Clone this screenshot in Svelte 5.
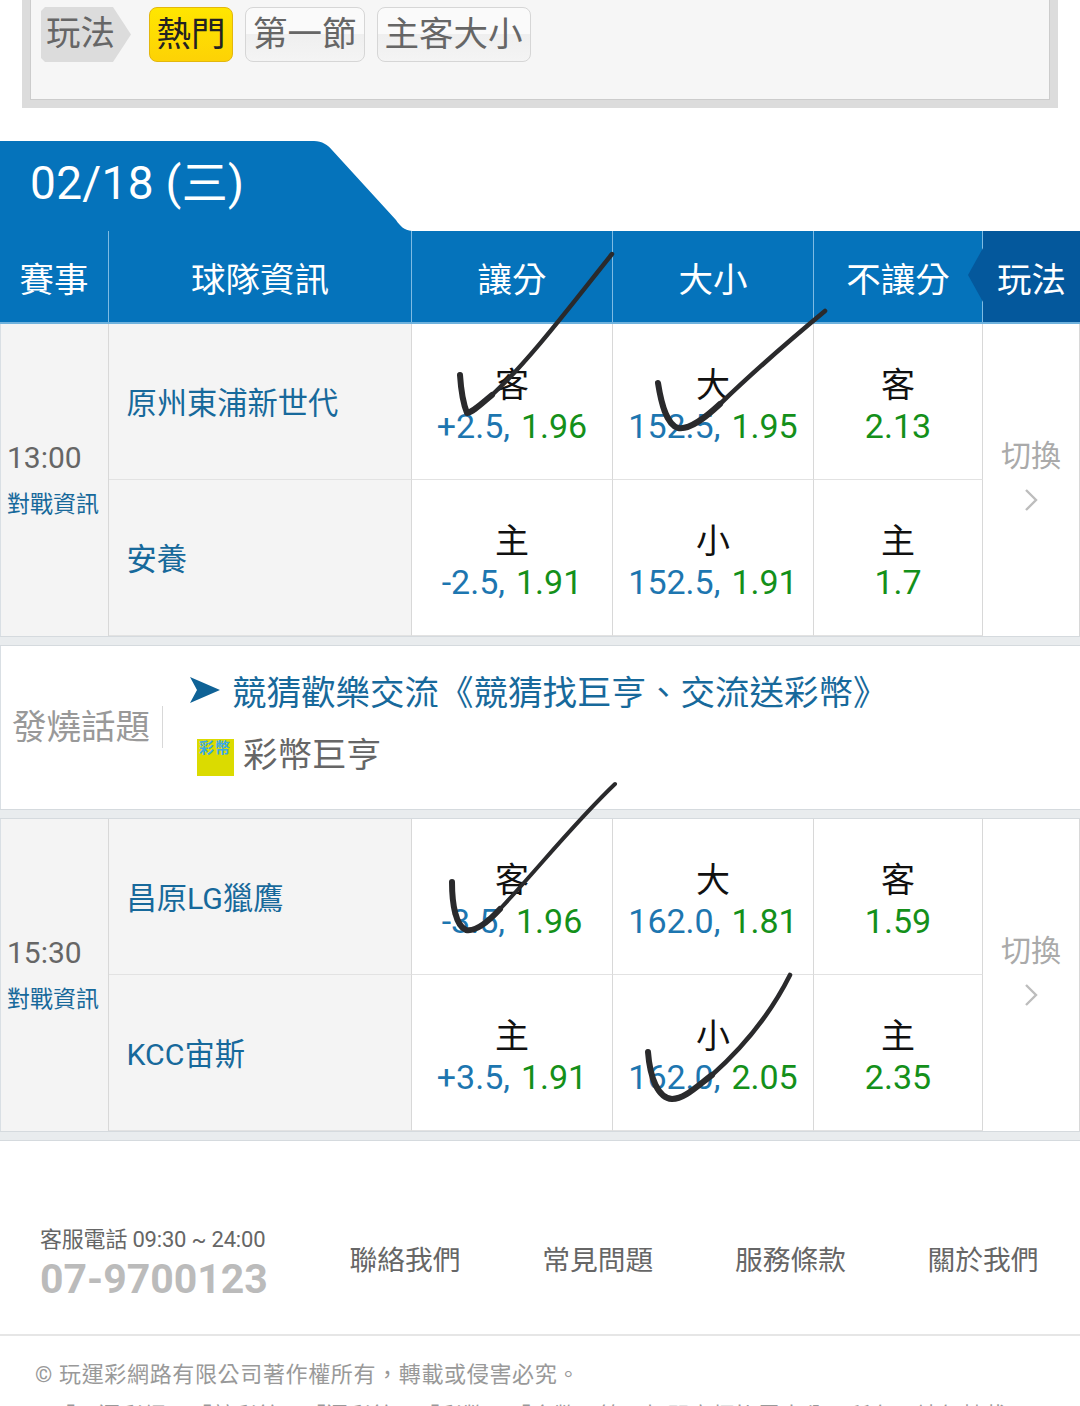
<script>
  const columns = ['賽事', '球隊資訊', '讓分', '大小', '不讓分'];
  const chips = ['第一節', '主客大小'];
  const matches = [
    {
      time: '13:00',
      rows: [
        { team: '原州東浦新世代', odds: [['客', '+2.5,', '1.96'], ['大', '152.5,', '1.95'], ['客', '', '2.13']] },
        { team: '安養', odds: [['主', '-2.5,', '1.91'], ['小', '152.5,', '1.91'], ['主', '', '1.7']] }
      ]
    },
    {
      time: '15:30',
      rows: [
        { team: '昌原LG獵鷹', odds: [['客', '-3.5,', '1.96'], ['大', '162.0,', '1.81'], ['客', '', '1.59']] },
        { team: 'KCC宙斯', odds: [['主', '+3.5,', '1.91'], ['小', '162.0,', '2.05'], ['主', '', '2.35']] }
      ]
    }
  ];
  const links = ['聯絡我們', '常見問題', '服務條款', '關於我們'];
</script>

{#snippet match(m)}
  <div class="match">
    <div class="time"><span class="clock">{m.time}</span><span class="vs">對戰資訊</span></div>
    {#each m.rows as row, i}
      <div class="team" style="grid-row: {i + 1}; grid-column: 2">{row.team}</div>
      {#each row.odds as o, j}
        <div class="odd" style="grid-row: {i + 1}; grid-column: {j + 3}">
          <span class="side">{o[0]}</span>
          <span class="nums">{#if o[1]}<span class="line">{o[1]}</span>{/if}<span class="price">{o[2]}</span></span>
        </div>
      {/each}
    {/each}
    <div class="switch">
      <span>切換</span>
      <svg width="14" height="24" viewBox="0 0 14 24"><path d="M2 2 L12 12 L2 22" fill="none" stroke="#bdbdbd" stroke-width="2.4" /></svg>
    </div>
  </div>
{/snippet}

<div class="page">
  <section class="filter">
    <div class="filter-inner">
      <span class="tag">玩法</span>
      <span class="chip hot">熱門</span>
      {#each chips as c}<span class="chip">{c}</span>{/each}
    </div>
  </section>

  <section class="board">
    <div class="date"><span>02/18 (三)</span></div>
    <div class="head">
      {#each columns as c}<div class="hcell">{c}</div>{/each}
      <div class="hcell play">玩法</div>
    </div>
    {@render match(matches[0])}
    <div class="strip"></div>
    <div class="topics">
      <div class="topics-title"><span>發燒話題</span></div>
      <div class="topics-list">
        <div class="topic one">
          <svg width="30" height="26" viewBox="0 0 30 26"><path d="M0 0 L30 13 L0 26 L7 13 Z" fill="#0f6296" /></svg>
          <span>競猜歡樂交流《競猜找巨亨、交流送彩幣》</span>
        </div>
        <div class="topic two">
          <span class="logo"><span>彩幣</span></span>
          <span>彩幣巨亨</span>
        </div>
      </div>
    </div>
    <div class="strip"></div>
    {@render match(matches[1])}
    <div class="strip last"></div>
  </section>

  <footer>
    <div class="contact">
      <div class="service">
        <span class="hours">客服電話 09:30 ~ 24:00</span>
        <span class="phone">07-9700123</span>
      </div>
      <nav>{#each links as l}<span>{l}</span>{/each}</nav>
    </div>
    <div class="legal">
      <p>© 玩運彩網路有限公司著作權所有，轉載或侵害必究。</p>
      <p class="marks">「玩運彩網」、「競彩館」、「運彩館」、「彩幣」、「金幣」等，相關商標皆屬本公司所有，請勿轉載。</p>
    </div>
  </footer>

  <svg class="ink" width="1080" height="1406" viewBox="0 0 1080 1406">
    <g fill="none" stroke="#2a2a2c" stroke-linecap="round" stroke-linejoin="round">
      <path stroke-width="6" d="M460 375 C461 390 463 403 467 413 C473 412 480 405 492 395" />
      <path stroke-width="4.4" d="M492 395 C530 360 575 300 612 254" />
      <path stroke-width="6" d="M658 383 C661 402 666 424 678 428 C690 430 705 418 720 404" />
      <path stroke-width="4.6" d="M720 404 C750 375 790 340 825 311" />
      <path stroke-width="6" d="M452 882 C452 905 456 926 466 930 C476 932 488 922 500 909" />
      <path stroke-width="4" d="M500 909 C535 872 575 822 615 784" />
      <path stroke-width="6" d="M648 1052 C650 1078 658 1098 672 1099 C684 1099 695 1088 712 1075" />
      <path stroke-width="4.6" d="M712 1075 C740 1050 770 1015 790 975" />
    </g>
  </svg>
</div>

<style>
  :global(body) {
    margin: 0;
    background: #fff;
  }
  .page {
    position: relative;
    width: 1080px;
    height: 1406px;
    overflow: hidden;
    font-family: Roboto, "Noto Sans CJK TC", sans-serif;
    background: #fff;
  }
  .filter {
    margin: 0 22px;
    height: 108px;
    box-sizing: border-box;
    background: #dcdcdc;
    padding: 0 8px 8px;
  }
  .filter-inner {
    height: 100px;
    box-sizing: border-box;
    background: #f6f6f6;
    border-bottom: 1px solid #ccc;
    border-left: 1px solid #ccc;
    border-right: 1px solid #ccc;
    padding: 7px 0 0 10px;
    display: flex;
    align-items: flex-start;
    gap: 12px;
  }
  .tag {
    width: 90px;
    height: 55px;
    box-sizing: border-box;
    padding-left: 5px;
    margin-right: 6px;
    font-size: 34.5px;
    line-height: 53px;
    color: #666;
    background: #dcdcdc;
    clip-path: polygon(0 4px, 4px 0, 72px 0, 90px 50%, 72px 100%, 4px 100%, 0 51px);
  }
  .chip {
    height: 55px;
    box-sizing: border-box;
    padding: 0 7px;
    font-size: 34.5px;
    line-height: 53px;
    color: #666;
    background: linear-gradient(#fafafa 50%, #efefef 50%, #f4f4f4);
    border: 1px solid #d6d6d6;
    border-radius: 8px;
  }
  .chip.hot {
    color: #222;
    padding: 0 6.5px;
    background: linear-gradient(#ffe600, #fdd205);
    border-color: #e3b70d;
  }
  .board {
    margin-top: 33px;
  }
  .date {
    width: 412px;
    height: 90px;
    background: #0573bb;
    clip-path: path("M0 0 H314 C322 0 328 4 332 9 L396 79 C400 85 404 89 412 90 H0 Z");
    color: #fff;
    font-size: 46px;
    letter-spacing: 0.3px;
    line-height: 84px;
    padding-left: 30px;
    box-sizing: border-box;
  }
  .head {
    display: grid;
    grid-template-columns: 109px 303px 201px 201px 169px 97px;
    height: 93px;
    background: #0573bb;
    border-bottom: 2px solid #6fb2dd;
    box-sizing: border-box;
  }
  .hcell {
    display: flex;
    align-items: center;
    justify-content: center;
    color: #fff;
    font-size: 34.5px;
    padding-top: 1px;
    border-right: 1px solid #7ebbe3;
    box-sizing: border-box;
  }
  .hcell.play {
    background: #04589c;
    border-right: 0;
    position: relative;
  }
  .hcell.play::before {
    content: "";
    position: absolute;
    left: -15px;
    top: 17px;
    border-right: 15px solid #04589c;
    border-top: 27px solid transparent;
    border-bottom: 27px solid transparent;
  }
  .match {
    display: grid;
    grid-template-columns: 108px 303px 201px 201px 169px 97px;
    grid-template-rows: 156px 156px;
    border-left: 1px solid #d9dfe4;
  }
  .time {
    grid-row: 1 / 3;
    grid-column: 1;
    background: #f4f4f4;
    border-right: 1px solid #d8d8d8;
    display: flex;
    flex-direction: column;
    justify-content: center;
    padding-left: 6px;
    gap: 10px;
    box-sizing: border-box;
  }
  .clock {
    font-size: 30px;
    line-height: 40px;
    color: #666;
  }
  .vs {
    font-size: 23px;
    line-height: 34px;
    color: #17699b;
    white-space: nowrap;
  }
  .team {
    display: flex;
    align-items: center;
    padding: 0 0 2px 17.5px;
    font-size: 30.25px;
    color: #17699b;
    background: #f4f4f4;
    border-right: 1px solid #d8d8d8;
    border-bottom: 1px solid #e2e2e2;
    box-sizing: border-box;
  }
  .odd {
    display: flex;
    flex-direction: column;
    align-items: center;
    justify-content: center;
    padding-top: 9px;
    border-right: 1px solid #d8d8d8;
    border-bottom: 1px solid #e2e2e2;
    box-sizing: border-box;
  }
  .side {
    font-size: 34px;
    line-height: 40px;
    color: #111;
  }
  .nums {
    font-size: 34px;
    line-height: 42px;
    white-space: nowrap;
  }
  .line {
    color: #1d76b0;
    margin-right: 11px;
  }
  .price {
    color: #14901a;
  }
  .switch {
    grid-row: 1 / 3;
    grid-column: 6;
    display: flex;
    flex-direction: column;
    align-items: center;
    justify-content: center;
    gap: 13px;
    padding: 0 0 18px 0;
    font-size: 30px;
    color: #aaa;
    border-right: 1px solid #d8d8d8;
    box-sizing: border-box;
  }
  .strip {
    height: 10px;
    background: #e9ecee;
    border-top: 1px solid #d5dade;
    border-bottom: 1px solid #d5dade;
    box-sizing: border-box;
  }
  .topics {
    height: 163px;
    display: flex;
    align-items: center;
    border-left: 1px solid #d9dfe4;
    box-sizing: border-box;
  }
  .topics-title {
    width: 189px;
    padding: 0 0 2px 11px;
    box-sizing: border-box;
    flex: none;
  }
  .topics-title span {
    display: inline-block;
    width: 150px;
    height: 42px;
    line-height: 42px;
    font-size: 34.5px;
    color: #999;
    border-right: 1px solid #d8d8d8;
    white-space: nowrap;
  }
  .topics-list {
    padding-bottom: 13px;
  }
  .topic {
    display: flex;
    align-items: center;
    font-size: 34.5px;
    white-space: nowrap;
  }
  .topic.one {
    color: #17699b;
    gap: 12px;
    height: 62px;
  }
  .topic.two {
    color: #666;
    gap: 9px;
    padding-left: 7px;
    height: 62px;
  }
  .logo {
    width: 37px;
    height: 37px;
    background: #dbdb00;
    position: relative;
    margin-top: 11px;
    flex: none;
  }
  .logo span {
    position: absolute;
    left: 2px;
    top: 2px;
    font-size: 15px;
    font-weight: 700;
    line-height: 15px;
    letter-spacing: 1px;
    color: #3ba9e6;
  }
  .contact {
    height: 195px;
    box-sizing: border-box;
    border-bottom: 2px solid #e6e6e6;
    padding: 85px 0 0 40px;
    display: flex;
    align-items: flex-start;
  }
  .service {
    width: 309.5px;
    flex: none;
    display: flex;
    flex-direction: column;
  }
  .hours {
    font-size: 22px;
    letter-spacing: -0.2px;
    line-height: 28px;
    color: #666;
    white-space: nowrap;
  }
  .phone {
    font-size: 41px;
    line-height: 50px;
    font-weight: 700;
    color: #bbb;
  }
  nav {
    display: flex;
    gap: 81.7px;
    padding-top: 17px;
    font-size: 27.75px;
    line-height: 36px;
    color: #666;
    white-space: nowrap;
  }
  .legal {
    padding: 24px 0 0 35px;
    font-size: 22px;
    letter-spacing: 0.65px;
    line-height: 30px;
    color: #999;
  }
  .legal p {
    margin: 0 0 11px;
    white-space: nowrap;
  }
  .legal .marks {
    padding-left: 18px;
  }
  .ink {
    position: absolute;
    left: 0;
    top: 0;
    pointer-events: none;
  }
</style>
